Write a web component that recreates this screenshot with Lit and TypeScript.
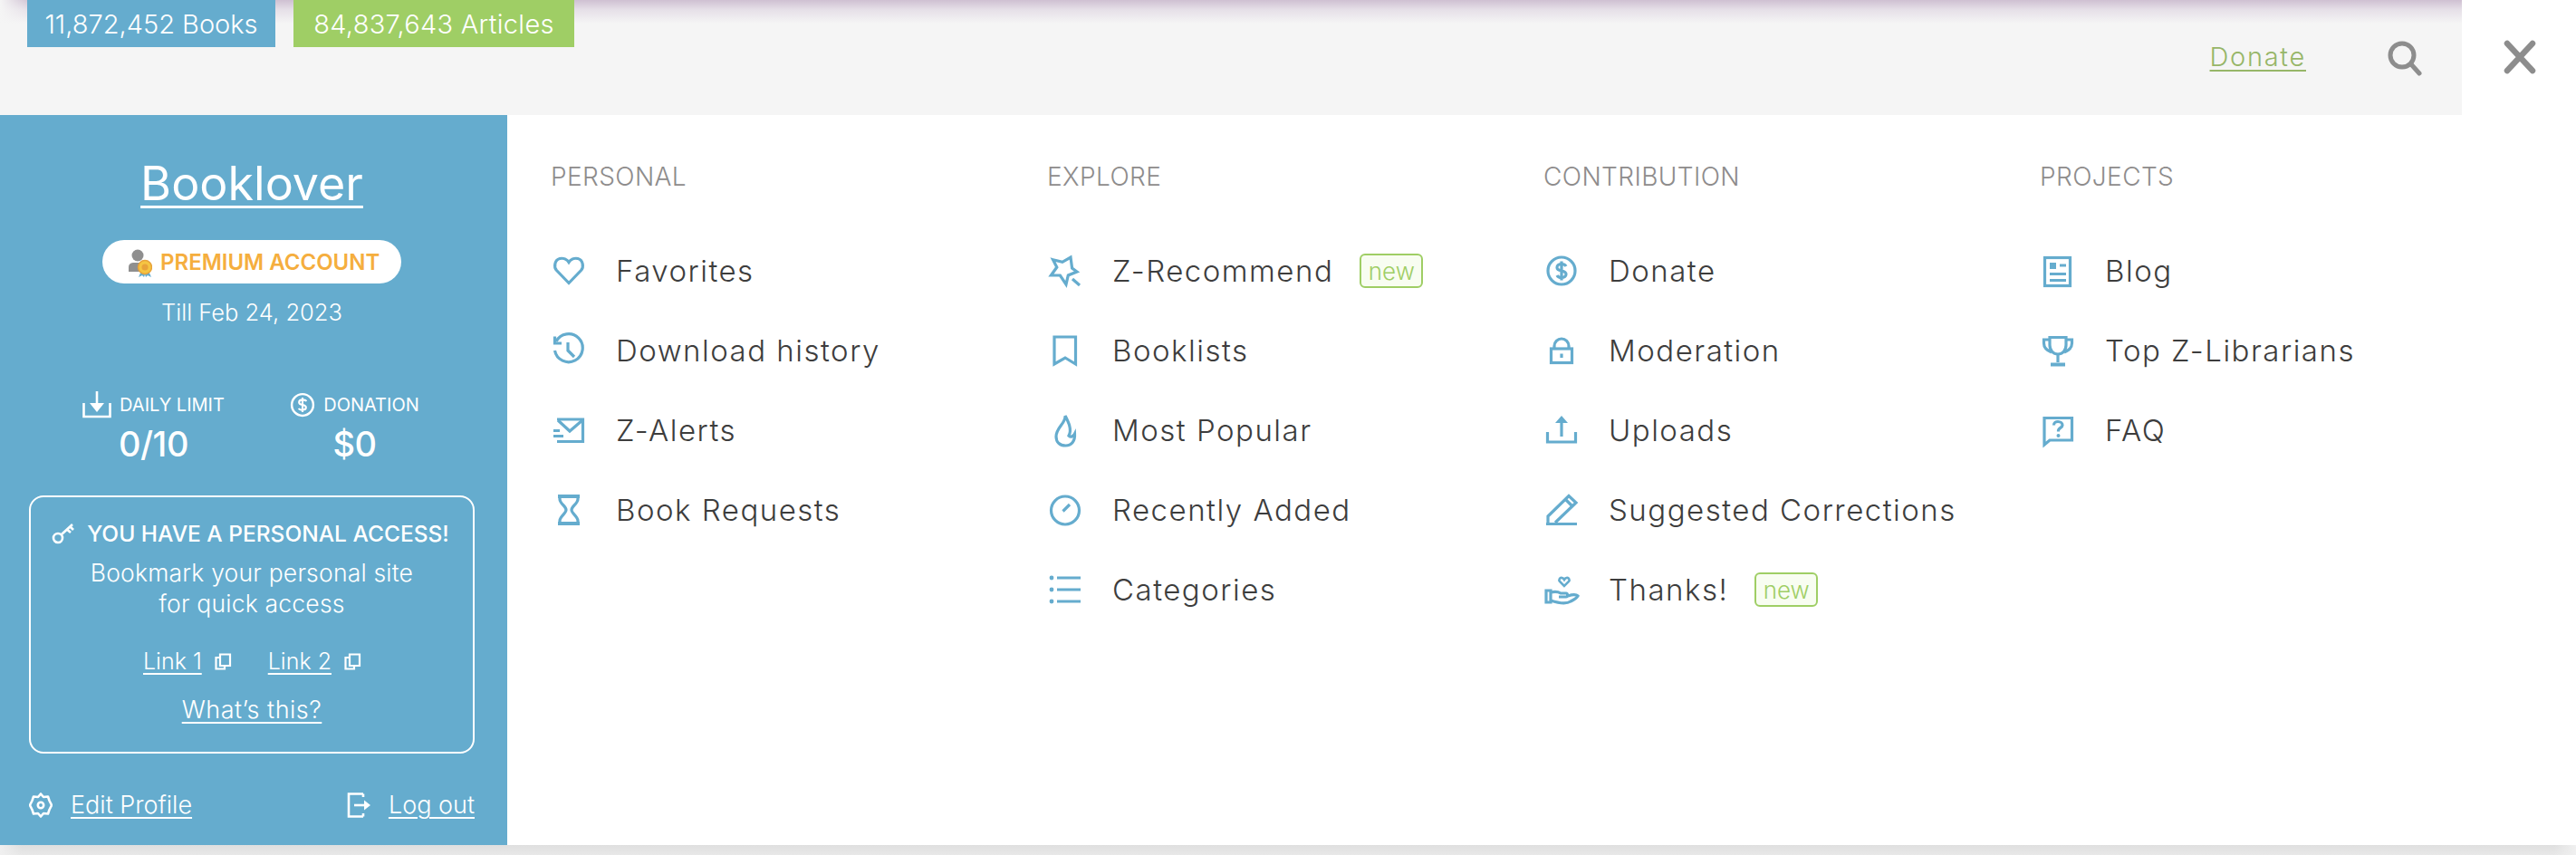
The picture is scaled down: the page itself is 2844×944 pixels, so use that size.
import { LitElement, html, css, svg } from "lit";
import { customElement } from "lit/decorators.js";

const I: Record<string, any> = {
  heart: svg`<path d="M20 33.5 L6.5 19.5 C3 15.5 4.5 8 10 6.5 C14 5.5 18 7.5 20 10.5 C22 7.5 26 5.5 30 6.5 C35.5 8 37 15.5 33.5 19.5 Z"/>`,
  history: svg`<path d="M6 10 A15.5 15.5 0 1 1 4.5 20"/><path d="M4.5 4.5 V12 H12"/><path d="M19 11 V20 L26 27"/>`,
  alerts: svg`<path d="M7 8 H35.5 V32.5 H7"/><path d="M8 9 L21 21 L35 9"/><path d="M3 20.5 H10 M3 26.5 H14"/>`,
  hour: svg`<path stroke-width="4" d="M8 5 H32 M8 35 H32"/><path d="M10 5 V8 C10 13 17 16 17 20 C17 24 10 27 10 32 V35 M30 5 V8 C30 13 23 16 23 20 C23 24 30 27 30 32 V35"/>`,
  wand: svg`<path d="M6.5 7.7 L16.9 10.3 L26 5 L27.6 17 L33 21 L23.3 25 L21 35 L14.4 25 L4.4 25 L10.8 16 Z"/><path d="M28 29 L36 36"/>`,
  bookmark: svg`<path d="M8 5 H31.5 V35 L20 28 L8 35 Z"/>`,
  flame: svg`<path d="M20 4 C21 12 10 17 10 27 C10 33 14 37 20.5 37 C27 37 31 32 30.5 24 C29 27 26 28 24 26 C28 19 23 10 20 4Z"/>`,
  clock: svg`<circle cx="20" cy="20.5" r="15.5"/><path d="M17.5 21.5 L25 14"/>`,
  list: svg`<path d="M11 7 H37 M11 20 H37 M11 33 H37"/><circle class="f" cx="5" cy="7" r="2.4"/><circle class="f" cx="5" cy="20" r="2.4"/><circle class="f" cx="5" cy="33" r="2.4"/>`,
  dollar: svg`<circle cx="20" cy="20" r="15"/><path d="M25 15 C24 13 22 12.5 20 12.5 C17 12.5 15 14 15 16.2 C15 18.5 17 19.4 20 20 C23 20.6 25 21.5 25 23.8 C25 26 23 27.5 20 27.5 C18 27.5 16 27 15 25 M20 9.5 V30.5"/>`,
  lock: svg`<rect x="8.5" y="18" width="23" height="15.5"/><path d="M12 18 V15 A8 8 0 0 1 28 15 V18"/><path d="M20 23.5 V28"/>`,
  upload: svg`<path d="M4.5 22 V33 H35.5 V22"/><path d="M20 27 V10"/><path class="f" d="M20 4 L27 12 H13 Z"/>`,
  pencil: svg`<path d="M3 35.5 H37"/><path d="M5 34 V27 L28 4.5 L36 12 L13 34"/><path d="M24 8 L32 16"/>`,
  hand: svg`<path stroke-width="2.6" d="M23 16 L18 11 C16.5 9 18 6.5 20.5 7 C22 7.3 23 9 23 9 C23 9 24 7.3 25.5 7 C28 6.5 29.5 9 28 11 Z"/><path d="M3 21 V34 H8 V21 Z"/><path d="M8 23 C12 22 16 22 19 24 H25 C27 24 27 28 25 28 H17"/><path d="M8 32 C14 34 24 37 30 33 C34 31 37 29 38 27 C36 25 33 25 27 27"/>`,
  blog: svg`<rect x="5.5" y="5.5" width="28" height="31"/><rect class="f" x="11" y="11" width="7" height="7"/><path d="M22 14 H29 M11 23.5 H29 M11 30.5 H29"/>`,
  trophy: svg`<path d="M11 5.5 H29 V14 C29 20 25 24 20 24 C15 24 11 20 11 14 Z"/><path d="M11 8 H4.5 V12 C4.5 17 8 20 13 22 M29 8 H35.5 V12 C35.5 17 32 20 27 22"/><path d="M20 24 V33"/><path stroke-width="4" d="M12 35.5 H28"/>`,
  faq: svg`<path d="M5 6.5 H35.5 V31 H11 L5 36 Z"/><path d="M15.5 14.5 C15.5 11.5 18 10.5 20 10.5 C23 10.5 25 12.5 25 14.5 C25 17 21 17.5 20.5 20 V21.5"/><circle class="f" cx="20.5" cy="26" r="2"/>`,
};

const cols = [
  { t: "PERSONAL", items: [["heart", "Favorites"], ["history", "Download history"], ["alerts", "Z-Alerts"], ["hour", "Book Requests"]] },
  { t: "EXPLORE", items: [["wand", "Z-Recommend", 1], ["bookmark", "Booklists"], ["flame", "Most Popular"], ["clock", "Recently Added"], ["list", "Categories"]] },
  { t: "CONTRIBUTION", items: [["dollar", "Donate"], ["lock", "Moderation"], ["upload", "Uploads"], ["pencil", "Suggested Corrections"], ["hand", "Thanks!", 1]] },
  { t: "PROJECTS", items: [["blog", "Blog"], ["trophy", "Top Z-Librarians"], ["faq", "FAQ"]] },
];

const copy = html`<svg class="copy" viewBox="0 0 19 19"><path d="M5 5 H1.5 V17.5 H11 V14"/><path d="M6 1.5 H17 V14 H6 Z"/></svg>`;

@customElement("app-root")
export class AppRoot extends LitElement {
  static styles = css`
    :host { display: block; width: 2844px; height: 944px; overflow: hidden; font-family: Inter, "Liberation Sans", sans-serif; font-weight: 300; background: #fff; }
    .top { display: flex; height: 127px; }
    .bar { width: 2718px; flex: none; box-sizing: border-box; padding-left: 30px; padding-right: 43px; display: flex; align-items: flex-start; gap: 20px;
      background: linear-gradient(to right, #f5f5f5 0, rgba(245,245,245,0) 34px), linear-gradient(to bottom, #cfc0d2 0, #e6e0e8 11px, #f5f5f5 26px); }
    .stat { height: 52px; display: flex; align-items: center; justify-content: center; color: #fff; font-size: 29px; box-sizing: border-box; }
    .books { width: 274px; background: #65acce; }
    .arts { width: 310px; background: #9fce65; letter-spacing: .3px; }
    .spacer { flex: 1; }
    .don { margin-top: 45px; color: #97b668; font-size: 29px; line-height: 36px; text-decoration: underline; text-underline-offset: 4px; letter-spacing: 1.7px; }
    .search { margin-top: 44px; margin-left: 69px; width: 40px; height: 40px; fill: none; stroke: #8d8d8d; stroke-width: 5; stroke-linecap: round; }
    .close { flex: 1; display: flex; padding: 43px 0 0 44px; box-sizing: border-box; }
    .close svg { width: 40px; height: 40px; stroke: #8d8d8d; stroke-width: 6.5; stroke-linecap: round; fill: none; }
    .body { display: flex; height: 806px; }
    .side { width: 560px; flex: none; box-sizing: border-box; background: #65acce; color: #fff; display: flex; flex-direction: column; align-items: center; padding: 46px 36px 0 32px; }
    .name { font-size: 52px; line-height: 60px; font-weight: 400; text-decoration: underline; text-decoration-thickness: 3px; text-underline-offset: 6px; color: #fff; }
    .pill { margin-top: 32px; width: 330px; height: 48px; border-radius: 24px; background: #fff; display: flex; align-items: center; box-sizing: border-box; padding-left: 29px; gap: 9px; color: #f5ae3e; font-size: 24px; font-weight: 600; white-space: nowrap; }
    .pill svg { width: 26px; height: 32px; flex: none; margin-top: 3px; }
    .till { margin-top: 16px; font-size: 25.5px; line-height: 32px; }
    .stats { margin-top: 70px; margin-left: 5px; display: grid; grid-template-columns: 222px 222px; justify-items: center; }
    .stbox { display: flex; flex-direction: column; align-items: center; }
    .stl { display: flex; align-items: center; gap: 9px; font-size: 20px; font-weight: 400; height: 32px; white-space: nowrap; }
    .stl svg { width: 32px; height: 32px; fill: none; stroke: #fff; stroke-width: 2.6; }
    .stv { font-size: 38px; font-weight: 500; line-height: 46px; margin-top: 4px; letter-spacing: -.5px; }
    .box { margin-top: 34px; align-self: stretch; height: 285px; flex: none; box-sizing: border-box; border: 2px solid #fff; border-radius: 16px; display: flex; flex-direction: column; align-items: center; padding-top: 24px; font-size: 25px; }
    .bt { display: flex; align-items: center; gap: 13px; font-size: 24.5px; font-weight: 500; line-height: 32px; white-space: nowrap; margin-left: -3px; }
    .bt svg { width: 26px; height: 24px; fill: none; stroke: #fff; stroke-width: 2.6; }
    .bd { text-align: center; line-height: 34px; margin-top: 10px; font-size: 26.5px; letter-spacing: .2px; }
    .lnks { display: flex; margin-top: 30px; line-height: 34px; margin-left: 1px; }
    .lk { display: flex; align-items: center; gap: 14px; margin: 0 20px; }
    a { color: inherit; text-decoration: underline; text-underline-offset: 4px; text-decoration-thickness: 1.5px; }
    .copy { width: 19px; height: 19px; fill: none; stroke: #fff; stroke-width: 2.2; }
    .wt { margin-top: 20px; line-height: 34px; font-size: 27px; letter-spacing: .5px; }
    .foot { align-self: stretch; display: flex; justify-content: space-between; margin-top: 40px; font-size: 27px; line-height: 34px; }
    .fi { display: flex; align-items: center; gap: 20px; }
    .fi svg { width: 26px; height: 28px; fill: none; stroke: #fff; stroke-width: 2.6; }
    .menu { flex: 1; display: grid; grid-template-columns: repeat(4, 548px); padding-left: 47px; background: #fff; }
    .ct { font-size: 28px; color: #8e8c8c; line-height: 34px; margin-top: 51px; padding-left: 1px; letter-spacing: .4px; }
    ul { list-style: none; margin: 63px 0 0; padding: 0 0 0 1px; display: flex; flex-direction: column; gap: 40px; }
    li { height: 48px; display: flex; align-items: center; color: #3d3d3d; font-size: 33px; letter-spacing: 1.5px; white-space: nowrap; }
    li svg { width: 40px; height: 40px; flex: none; margin-right: 32px; fill: none; stroke: #65acce; stroke-width: 3.2; }
    li svg .f { fill: #65acce; stroke: none; }
    .new { margin-left: 29px; width: 70px; height: 38px; box-sizing: border-box; border: 2px solid #9fce65; border-radius: 6px; background: #f8fdf1; color: #9fce65; font-size: 26px; letter-spacing: 0; display: flex; align-items: center; justify-content: center; }
    .shade { height: 11px; background: linear-gradient(to right, #f0f0f0 0, rgba(240,240,240,0) 24px, rgba(240,240,240,0) 2820px, #f0f0f0 2844px), linear-gradient(to bottom, #dfdfdf, #e8e8e8); }
  `;

  render() {
    return html`
      <div class="top">
        <div class="bar">
          <div class="stat books">11,872,452 Books</div>
          <div class="stat arts">84,837,643 Articles</div>
          <div class="spacer"></div>
          <a class="don">Donate</a>
          <svg class="search" viewBox="0 0 40 40"><circle cx="17" cy="17" r="13"/><path d="M27 27 L36 37"/></svg>
        </div>
        <div class="close"><svg viewBox="0 0 40 40"><path d="M6 5 L34 35 M34 5 L6 35"/></svg></div>
      </div>
      <div class="body">
        <aside class="side">
          <a class="name">Booklover</a>
          <div class="pill">
            <svg viewBox="0 0 26 32"><circle cx="10" cy="7" r="6.5" fill="#8f8f8f"/><path d="M0 25 V20 C0 16 3 15 6 15 H15 V25 Z" fill="#8f8f8f"/><path d="M14 24 L11 31 L15 29 L17 31 L19 25 Z M22 24 L25 31 L21 29 L19 31 L17 25 Z" fill="#65acce"/><circle cx="18" cy="20" r="7.5" fill="#f5c542" stroke="#e8a33a" stroke-width="1.5"/><circle cx="18" cy="20" r="3.5" fill="#e8a33a"/></svg>
            PREMIUM ACCOUNT
          </div>
          <div class="till">Till Feb 24, 2023</div>
          <div class="stats">
            <div class="stbox">
              <div class="stl"><svg viewBox="0 0 32 32"><path d="M1.5 14 V29 H30.5 V14"/><path d="M16 1 V18"/><path d="M16 24 L8 14 H24 Z" fill="#fff" stroke="none"/></svg>DAILY LIMIT</div>
              <div class="stv">0/10</div>
            </div>
            <div class="stbox">
              <div class="stl"><svg style="width:28px;height:28px" viewBox="0 0 40 40"><circle cx="20" cy="20" r="17" stroke-width="3.5"/><path stroke-width="3" d="M26 14.5 C25 12.5 23 12 20 12 C17 12 14.5 13.5 14.5 16 C14.5 18.5 17 19.4 20 20 C23 20.6 25.5 21.5 25.5 24 C25.5 26.5 23 28 20 28 C17 28 15 27.5 14 25.5 M20 8.5 V31.5"/></svg>DONATION</div>
              <div class="stv">$0</div>
            </div>
          </div>
          <div class="box">
            <div class="bt"><svg viewBox="0 0 26 24"><circle cx="7" cy="17" r="5"/><path d="M11 13 L23 2 M17 7.5 L21 11 M20.5 4.5 L24 8"/></svg>YOU HAVE A PERSONAL ACCESS!</div>
            <div class="bd">Bookmark your personal site<br />for quick access</div>
            <div class="lnks">
              <div class="lk"><a>Link 1</a>${copy}</div>
              <div class="lk"><a>Link 2</a>${copy}</div>
            </div>
            <a class="wt">What’s this?</a>
          </div>
          <div class="foot">
            <div class="fi"><svg viewBox="0 0 26 28"><path d="M13 1.5 L16 5 L21 4.5 L22.5 9 L25 14 L22.5 19 L21 23.5 L16 23 L13 26.5 L10 23 L5 23.5 L3.5 19 L1 14 L3.5 9 L5 4.5 L10 5 Z" stroke-linejoin="round"/><circle cx="13" cy="14" r="3.2"/></svg><a>Edit Profile</a></div>
            <div class="fi"><svg viewBox="0 0 26 28"><path d="M18 1.5 H2 V26.5 H18 M18 1.5 V5 M18 26.5 V23"/><path d="M8 14 H20"/><path d="M19 8.5 L26 14 L19 19.5 Z" fill="#fff" stroke="none"/></svg><a>Log out</a></div>
          </div>
        </aside>
        <main class="menu">
          ${cols.map(c => html`<section>
            <div class="ct">${c.t}</div>
            <ul>${c.items.map(i => html`<li><svg viewBox="0 0 40 40">${I[i[0] as string]}</svg>${i[1]}${i[2] ? html`<span class="new">new</span>` : ""}</li>`)}</ul>
          </section>`)}
        </main>
      </div>
      <div class="shade"></div>
    `;
  }
}
